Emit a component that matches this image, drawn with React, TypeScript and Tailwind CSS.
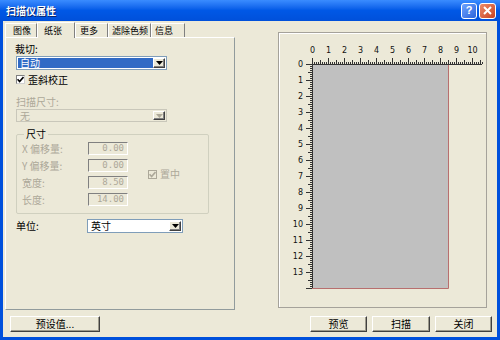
import React from 'react';

const cjk = "font-['Noto_Sans_CJK_SC','Noto_Sans',sans-serif]";

function Arrow({ disabled }: { disabled?: boolean }) {
  return (
    <div className="w-[12px] h-full flex items-center justify-center bg-[#ECE9D8] border border-t-white border-l-white border-r-[#404040] border-b-[#404040] shadow-[inset_-1px_-1px_0_#808080]">
      <svg width="7" height="4" viewBox="0 0 7 4">
        <polygon points="0,0 7,0 3.5,4" fill={disabled ? '#ACA899' : '#000'} />
      </svg>
    </div>
  );
}

function Check({ disabled }: { disabled?: boolean }) {
  return (
    <div
      className={
        disabled
          ? 'w-[9px] h-[9px] border border-[#ACA899] bg-[#ECE9D8] flex items-center justify-center'
          : 'w-[9px] h-[9px] border border-t-[#808080] border-l-[#808080] border-r-[#d0d0d0] border-b-[#d0d0d0] bg-white flex items-center justify-center'
      }
    >
      <svg width="7" height="7" viewBox="0 0 7 7">
        <path d="M0.5 3.2 L2.6 5.6 L6.5 1" stroke={disabled ? '#ACA899' : '#000'} strokeWidth="1.6" fill="none" />
      </svg>
    </div>
  );
}

function Field({ label, value }: { label: string; value: string }) {
  return (
    <div className="flex items-center h-[13px]">
      <div className="w-[66px] text-[10px] text-[#ACA899] leading-none whitespace-nowrap">{label}</div>
      <div className="w-[40px] h-[13px] border border-t-[#808080] border-l-[#808080] border-r-white border-b-white flex items-center justify-end pr-[3px] text-[9px] text-[#ACA899] font-['DejaVu_Sans_Mono',monospace] leading-none">
        {value}
      </div>
    </div>
  );
}

function Button({ label, w }: { label: string; w: string }) {
  return (
    <div
      className={`${w} h-[16px] flex items-center justify-center bg-[#ECE9D8] border border-t-white border-l-white border-r-[#404040] border-b-[#404040] shadow-[inset_-1px_-1px_0_#9d9a8c] text-[10px] text-black leading-none`}
    >
      {label}
    </div>
  );
}

function Ruler() {
  const ox = 33;
  const oy = 31;
  const inch = 16;
  const h: React.ReactNode[] = [];
  for (let i = 0; i <= 85; i++) {
    const x = ox + i * 2 + 0.5;
    const len = i % 8 === 0 ? 6 : i % 4 === 0 ? 4 : 2;
    h.push(<line key={'h' + i} x1={x} x2={x} y1={oy} y2={oy - len} stroke="#333" strokeWidth="1" />);
  }
  const v: React.ReactNode[] = [];
  for (let i = 0; i <= 112; i++) {
    const y = oy + i * 2 + 0.5;
    const len = i % 8 === 0 ? 6 : i % 4 === 0 ? 4 : 2;
    v.push(<line key={'v' + i} x1={ox} x2={ox - len} y1={y} y2={y} stroke="#333" strokeWidth="1" />);
  }
  const hn: React.ReactNode[] = [];
  for (let i = 0; i <= 10; i++) {
    hn.push(
      <text key={'hn' + i} x={ox + i * inch + 0.5} y={20} fontSize="8" textAnchor="middle" fill="#111" fontFamily="DejaVu Sans, sans-serif">
        {i}
      </text>
    );
  }
  const vn: React.ReactNode[] = [];
  for (let i = 0; i <= 13; i++) {
    vn.push(
      <text key={'vn' + i} x={24} y={oy + i * inch + 3} fontSize="8" textAnchor="end" fill="#111" fontFamily="DejaVu Sans, sans-serif">
        {i}
      </text>
    );
  }
  return (
    <svg width="207" height="274" viewBox="0 0 207 274">
      <rect x={ox} y={oy} width={136} height={224} fill="#C0C0C0" />
      <line x1={ox + 136.5} x2={ox + 136.5} y1={oy} y2={oy + 224.5} stroke="#B86F6F" />
      <line x1={ox} x2={ox + 136.5} y1={oy + 224.5} y2={oy + 224.5} stroke="#B86F6F" />
      <line x1={ox} x2={ox + 170} y1={oy + 0.5} y2={oy + 0.5} stroke="#333" />
      <line x1={ox + 0.5} x2={ox + 0.5} y1={oy} y2={oy + 224} stroke="#333" />
      {h}
      {v}
      {hn}
      {vn}
    </svg>
  );
}

export default function App() {
  const tabs = [
    { t: '图像', w: 'w-[32px]', pl: 'pl-[7px]' },
    { t: '纸张', w: 'w-[38px]', pl: 'pl-[6px]', sel: true },
    { t: '更多', w: 'w-[33px]', pl: 'pl-[4px]' },
    { t: '滤除色频', w: 'w-[43px]', pl: 'pl-[3px]' },
    { t: '信息', w: 'w-[34px]', pl: 'pl-[3px]' },
  ];
  return (
    <div className={`w-[500px] h-[340px] flex flex-col bg-[#0050DC] ${cjk} select-none`}>
      {/* title bar */}
      <div className="h-[21px] flex items-center justify-between pl-[6px] pr-[4px] bg-gradient-to-b from-[#3A8CFF] via-[#0058E6] to-[#0050DA]">
        <div className="text-white text-[10px] font-bold leading-none [text-shadow:1px_1px_0_#0A246A]">扫描仪属性</div>
        <div className="flex items-center gap-[2px]">
          <div className="w-[16px] h-[16px] rounded-[3px] border border-white bg-gradient-to-br from-[#6EA3FF] to-[#2C62DA] flex items-center justify-center text-white text-[11px] font-bold font-['Liberation_Sans',sans-serif] leading-none">
            ?
          </div>
          <div className="w-[17px] h-[16px] rounded-[3px] border border-white bg-gradient-to-br from-[#EC8B6B] to-[#C8401C] flex items-center justify-center">
            <svg width="9" height="9" viewBox="0 0 9 9">
              <path d="M1 1 L8 8 M8 1 L1 8" stroke="white" strokeWidth="2" />
            </svg>
          </div>
        </div>
      </div>

      {/* body */}
      <div className="flex-1 mx-[3px] mb-[3px] bg-[#ECE9D8] flex flex-col">
        <div className="flex items-start">
          {/* left column */}
          <div className="ml-[2px] w-[230px] flex flex-col">
            <div className="h-[16px] flex items-end">
              {tabs.map((tb) =>
                tb.sel ? (
                  <div
                    key={tb.t}
                    className={`${tb.w} ${tb.pl} h-[16px] -mb-[1px] z-10 bg-[#ECE9D8] border-t border-l border-r border-t-white border-l-white border-r-[#808080] flex items-center whitespace-nowrap text-[9px] leading-none text-black`}
                  >
                    {tb.t}
                  </div>
                ) : (
                  <div
                    key={tb.t}
                    className={`${tb.w} ${tb.pl} h-[14px] bg-[#ECE9D8] border-t border-l border-r border-t-white border-l-white border-r-[#808080] flex items-center whitespace-nowrap text-[9px] leading-none text-black`}
                  >
                    {tb.t}
                  </div>
                )
              )}
            </div>
            <div className="h-[273px] border border-l-white border-t-white border-r-[#919B9C] border-b-[#919B9C] flex flex-col pl-[9px]">
              <div className="mt-[5px] h-[11px] text-[10px] leading-[11px] text-black">裁切:</div>
              <div className="mt-[2px] ml-[1px] w-[151px] h-[14px] border border-[#7F9DB9] bg-white flex p-[1px]">
                <div className="flex-1 bg-[#316AC5] text-white text-[10px] leading-none flex items-center pl-[2px]">自动</div>
                <Arrow />
              </div>
              <div className="mt-[4px] ml-[1px] h-[11px] flex items-center gap-[3px]">
                <Check />
                <div className="text-[10px] leading-none text-black">歪斜校正</div>
              </div>
              <div className="mt-[11px] ml-[1px] h-[11px] text-[10px] leading-[11px] text-[#ACA899]">扫描尺寸:</div>
              <div className="mt-[2px] ml-[1px] w-[151px] h-[13px] border border-[#C9C7BA] bg-[#ECE9D8] flex p-[1px]">
                <div className="flex-1 text-[#ACA899] text-[10px] leading-none flex items-center pl-[2px]">无</div>
                <Arrow disabled />
              </div>
              <fieldset className="mt-[7px] ml-[1px] w-[193px] h-[85px] border border-[#D0D0BF] rounded-[2px] pl-[5px]">
                <legend className="px-[2px] ml-[2px] text-[10px] leading-[10px] text-black">尺寸</legend>
                <div className="flex items-center mt-[3px]">
                  <div className="flex flex-col gap-[4px]">
                    <Field label="X 偏移量:" value="0.00" />
                    <Field label="Y 偏移量:" value="0.00" />
                    <Field label="宽度:" value="8.50" />
                    <Field label="长度:" value="14.00" />
                  </div>
                  <div className="ml-[20px] flex items-center gap-[3px]">
                    <Check disabled />
                    <div className="text-[10px] leading-none text-[#ACA899]">置中</div>
                  </div>
                </div>
              </fieldset>
              <div className="mt-[5px] ml-[1px] flex items-center h-[13px]">
                <div className="w-[71px] text-[10px] leading-none text-black">单位:</div>
                <div className="w-[96px] h-[14px] border border-[#7F9DB9] bg-white flex p-[1px]">
                  <div className="flex-1 text-black text-[10px] leading-none flex items-center pl-[2px]">英寸</div>
                  <Arrow />
                </div>
              </div>
            </div>
          </div>

          {/* right preview box */}
          <div className="ml-[43px] mt-[11px] w-[209px] h-[276px] border border-[#A5A29A] shadow-[inset_1px_1px_0_white] flex">
            <Ruler />
          </div>
        </div>

        <div className="mt-[6px] flex items-center">
          <div className="ml-[7px]">
            <Button label="预设值..." w="w-[90px]" />
          </div>
          <div className="ml-auto mr-[5px] flex gap-[5px]">
            <Button label="预览" w="w-[57px]" />
            <Button label="扫描" w="w-[58px]" />
            <Button label="关闭" w="w-[57px]" />
          </div>
        </div>
      </div>
    </div>
  );
}
